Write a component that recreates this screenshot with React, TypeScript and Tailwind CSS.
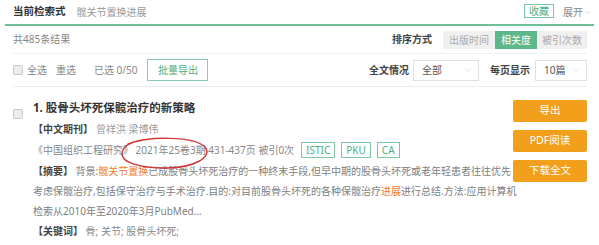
import { ChevronDown } from "lucide-react";

const GREEN = "#5cb88b";

function Checkbox() {
  return <span className="inline-block w-[10px] h-[10px] rounded-[2px] border border-[#c8c8c8] bg-[#ececec]" />;
}

function Select({ value, width }: { value: string; width: string }) {
  return (
    <div className={`${width} h-[21px] border border-[#e0e0e0] flex items-center justify-between pl-[8px] pr-[4px] text-[#555]`}>
      <span>{value}</span>
      <ChevronDown size={12} strokeWidth={1} color="#c4c4c4" />
    </div>
  );
}

function Tag({ children }: { children: string }) {
  return (
    <span className="inline-flex items-center h-[16px] px-[4px] border border-[#7cc6a2] text-[#4fae80] text-[10px] leading-none">
      {children}
    </span>
  );
}

function OrangeButton({ children }: { children: string }) {
  return (
    <div className="h-[22px] w-[74px] rounded-[2px] bg-[#f2a01c] text-white text-[10.5px] flex items-center justify-center">
      {children}
    </div>
  );
}

export default function App() {
  return (
    <div
      className="relative w-[599px] h-[245px] overflow-hidden bg-white text-[10px] text-[#777]"
      style={{ fontFamily: '"Noto Sans", "Noto Sans CJK SC", sans-serif' }}
    >
      {/* search header */}
      <div className="mx-[5px] h-[26px] border-b-2 border-[#6dbf96] flex items-center pl-[8px] pr-[2px]">
        <span className="font-bold text-[#333] text-[10.5px]">当前检索式</span>
        <span className="ml-[11px] text-[#999]">髋关节置换进展</span>
        <div className="ml-auto flex items-center">
          <span className="h-[14px] px-[4px] border border-[#7cc6a2] text-[#4fae80] flex items-center mb-[2px]">收藏</span>
          <span className="ml-[9px] text-[#888] flex items-center">
            展开
            <ChevronDown size={9} strokeWidth={1} color="#aaa" />
          </span>
        </div>
      </div>

      <div className="pl-[13px] pr-[12px]">
        {/* result count + sorting */}
        <div className="h-[28px] flex items-center justify-between border-b border-[#f0f0f0]">
          <span className="text-[#888]">共485条结果</span>
          <div className="flex items-center">
            <span className="font-bold text-[#444] mr-[11px]">排序方式</span>
            <div className="flex h-[18px] bg-[#f0f0f0] text-[#aaa] leading-[18px]">
              <span className="px-[6px]">出版时间</span>
              <span className="px-[6px] text-white" style={{ background: GREEN }}>相关度</span>
              <span className="px-[5px]">被引次数</span>
            </div>
          </div>
        </div>

        {/* selection bar */}
        <div className="h-[33px] flex items-center border-b border-[#ececec]">
          <Checkbox />
          <span className="ml-[4px] text-[#888]">全选</span>
          <span className="ml-[9px] text-[#888]">重选</span>
          <span className="ml-[18px] text-[#888]">已选 0/50</span>
          <span className="ml-[10px] h-[22px] w-[61px] border border-[#8ccdad] text-[#4fae80] flex items-center justify-center">批量导出</span>
          <div className="ml-auto flex items-center">
            <span className="font-bold text-[#444] mr-[4px]">全文情况</span>
            <Select value="全部" width="w-[66px]" />
            <span className="font-bold text-[#444] ml-[11px] mr-[5px]">每页显示</span>
            <Select value="10篇" width="w-[52px]" />
          </div>
        </div>

        {/* result item */}
        <div className="flex pt-[12px]">
          <div className="pt-[9px]">
            <Checkbox />
          </div>
          <div className="ml-[10px] flex-1 min-w-0 leading-[20px]">
            <div className="font-bold text-[#333] text-[11.5px] h-[20px] leading-[18px]">1. 股骨头坏死保髋治疗的新策略</div>
            <div>
              <span className="font-bold text-[#444]">【中文期刊】</span>
              <span className="ml-[3px] text-[#999]">曾祥洪 梁博伟</span>
            </div>
            <div className="flex items-center h-[22px]">
              <span className="text-[#888]">《中国组织工程研究》 2021年25卷3期 431-437页 被引0次</span>
              <span className="ml-[7px] flex gap-[6px]">
                <Tag>ISTIC</Tag>
                <Tag>PKU</Tag>
                <Tag>CA</Tag>
              </span>
            </div>
            <div className="whitespace-nowrap text-[#808080]">
              <span className="font-bold text-[#444]">【摘要】</span> 背景:<span className="text-[#f07a2c]">髋关节置换</span>已成股骨头坏死治疗的一种终末手段,但早中期的股骨头坏死或老年轻患者往往优先
              <br />
              考虑保髋治疗,包括保守治疗与手术治疗.目的:对目前股骨头坏死的各种保髋治疗<span className="text-[#f07a2c]">进展</span>进行总结.方法:应用计算机
              <br />
              检索从2010年至2020年3月PubMed...
            </div>
            <div className="text-[#888]">
              <span className="font-bold text-[#444]">【关键词】</span> 骨; 关节; 股骨头坏死;
            </div>
          </div>
          <div className="ml-[8px] mt-[1px] shrink-0 flex flex-col gap-[8px]">
            <OrangeButton>导出</OrangeButton>
            <OrangeButton>PDF阅读</OrangeButton>
            <OrangeButton>下载全文</OrangeButton>
          </div>
        </div>
      </div>

      {/* hand-drawn annotation */}
      <svg className="absolute left-[118px] top-[135px]" width="96" height="36" viewBox="0 0 96 36" fill="none">
        <path
          d="M10 9 C 30 1, 76 1, 87 12 C 95 22, 76 33, 48 33 C 20 33, 3 27, 4 18 C 5 12, 12 7, 24 5"
          stroke="#d23a3a"
          strokeWidth="1.5"
          strokeLinecap="round"
        />
      </svg>
    </div>
  );
}
